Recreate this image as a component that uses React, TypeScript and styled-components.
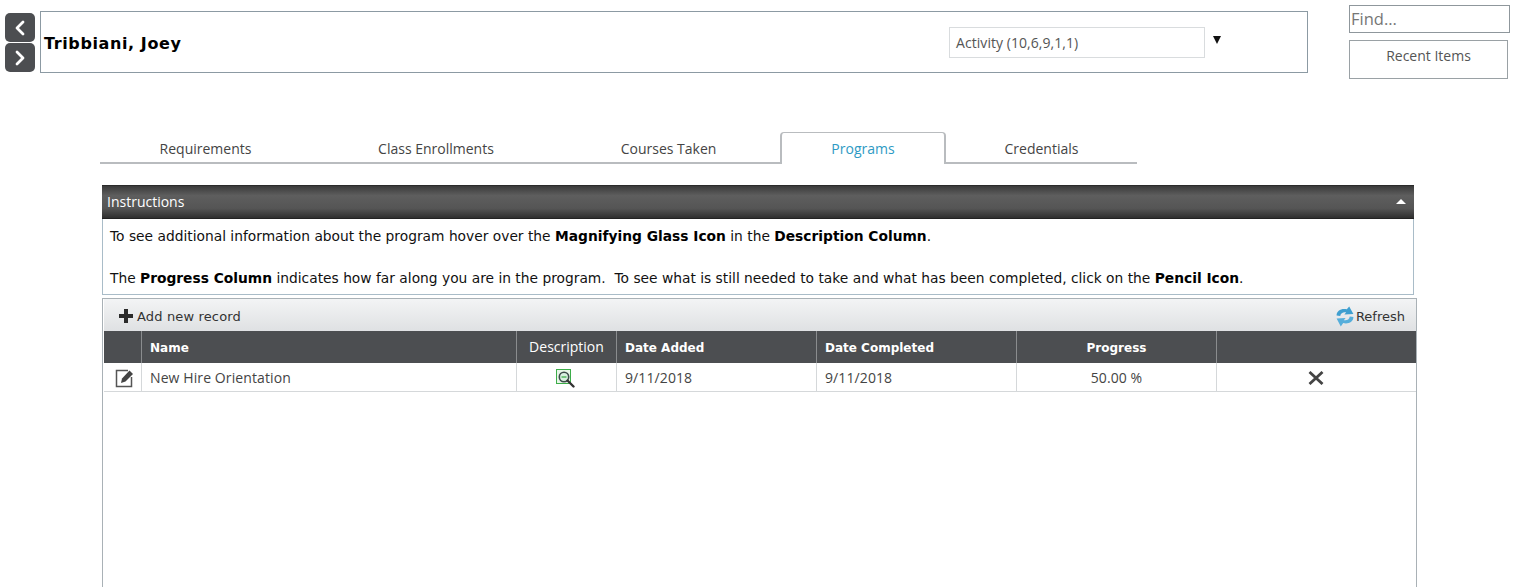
import styled, { createGlobalStyle } from 'styled-components';

const uiFont = `"Open Sans", "Noto Sans", "Liberation Sans", sans-serif`;
const verdana = `"DejaVu Sans", Verdana, sans-serif`;

const GlobalStyle = createGlobalStyle`
  html, body {
    margin: 0;
    padding: 0;
    height: 587px;
    overflow: hidden;
    background: #fff;
  }
  * { box-sizing: border-box; }
`;

const Page = styled.div`
  width: 1532px;
  height: 587px;
  overflow: hidden;
  display: flex;
  flex-direction: column;
  color: #333;
`;

const TopBar = styled.header`
  display: flex;
  align-items: flex-start;
  height: 132px;
  padding: 5px 0 0 5px;
`;

const NavButtons = styled.div`
  display: flex;
  flex-direction: column;
  gap: 1px;
  margin: 8px 5px 0 0;
`;

const NavButton = styled.button`
  width: 30px;
  height: 29px;
  padding: 0;
  border: 0;
  border-radius: 5px;
  background: #4c4e51;
  display: flex;
  align-items: center;
  justify-content: center;
`;

const PersonBox = styled.div`
  width: 1268px;
  height: 62px;
  margin-top: 6px;
  border: 1px solid #8c9aa3;
  display: flex;
  align-items: center;
  padding-left: 3px;
`;

const PersonName = styled.div`
  font: bold 16px ${verdana};
  letter-spacing: 0.6px;
  color: #000;
  width: 905px;
  margin-top: 2px;
`;

const ActivitySelect = styled.div`
  width: 256px;
  height: 31px;
  border: 1px solid #d9dcde;
  padding-left: 6px;
  display: flex;
  align-items: center;
  font: 14px ${uiFont};
  letter-spacing: 0.06px;
  color: #555;
`;

const Caret = styled.span`
  width: 0;
  height: 0;
  margin: -5px 0 0 8px;
  border-left: 4px solid transparent;
  border-right: 4px solid transparent;
  border-top: 8px solid #111;
`;

const SideColumn = styled.div`
  display: flex;
  flex-direction: column;
  margin-left: 41px;
  gap: 7px;
`;

const FindInput = styled.div`
  width: 161px;
  height: 28px;
  border: 1px solid #8f979c;
  padding-left: 1px;
  font: 16.500px/25px ${uiFont};
  color: #767676;
`;

const RecentButton = styled.div`
  width: 159px;
  height: 39px;
  border: 1px solid #9aa1a5;
  text-align: center;
  font: 14px/29px ${uiFont};
  color: #555;
`;

const Tabs = styled.nav`
  display: flex;
  align-items: flex-end;
  width: 1037px;
  height: 32px;
  margin-left: 100px;
  border-bottom: 2px solid #b9bcbf;
`;

const Tab = styled.div<{ $active?: boolean; $width: number; $trim?: number }>`
  flex: none;
  width: ${p => p.$width}px;
  height: ${p => (p.$active ? '32px' : '30px')};
  padding-right: ${p => p.$trim || 0}px;
  text-align: center;
  font: 14px/33px ${uiFont};
  color: ${p => (p.$active ? '#2e9ac4' : '#444')};
  background: #fff;
  margin-bottom: ${p => (p.$active ? '-2px' : '0')};
  ${p =>
    p.$active &&
    `
    border: 2px solid #b9bcbf;
    border-bottom: 0;
    border-top-width: 1px;
    border-radius: 4px 4px 0 0;
    line-height: 31px;
  `}
`;

const Panel = styled.section`
  width: 1312px;
  height: 110px;
  margin: 21px 0 0 102px;
`;

const PanelHeader = styled.div`
  height: 34px;
  padding: 0 8px 2px 5px;
  display: flex;
  align-items: center;
  justify-content: space-between;
  background: linear-gradient(#3a3a3a 0%, #5e5e5e 30%, #555 70%, #2f2f2f 100%);
  border-top: 1px solid #2a2a2a;
  border-bottom: 1px solid #222;
  font: 14px ${uiFont};
  color: #fff;
`;

const CollapseArrow = styled.span`
  width: 0;
  height: 0;
  border-left: 5px solid transparent;
  border-right: 5px solid transparent;
  border-bottom: 5px solid #fff;
`;

const PanelBody = styled.div`
  height: 76px;
  border: 1px solid #a9bcc8;
  border-top: 0;
  padding: 7px 7px 0;
  font: 13.800px/21px ${verdana};
  color: #111;

  b { color: #000; }
  p { margin: 0; white-space: pre; }
  p + p { margin-top: 21px; }
`;

const GridBox = styled.section`
  width: 1315px;
  flex: 1;
  margin: 3px 0 0 102px;
  border: 1px solid #a9b1b6;
  border-bottom: 0;
  padding-left: 1px;
`;

const Toolbar = styled.div`
  height: 32px;
  display: flex;
  align-items: center;
  justify-content: space-between;
  padding: 2px 11px 0 15px;
  background: linear-gradient(#f3f4f5, #dfe1e3);
  font: 13px ${verdana};
  color: #333;
`;

const ToolbarAction = styled.div<{ $gap: number; $spacing?: number }>`
  display: flex;
  align-items: center;
  gap: ${p => p.$gap}px;
  letter-spacing: ${p => p.$spacing || 0}px;
`;

const Row = styled.div<{ $head?: boolean }>`
  display: grid;
  grid-template-columns: 37px 375px 100px 200px 200px 200px 200px;
  height: ${p => (p.$head ? '32px' : '29px')};
  background: ${p => (p.$head ? '#4c4e51' : '#fff')};
  border-bottom: ${p => (p.$head ? '0' : '1px solid #d5d8da')};
`;

const Cell = styled.div<{ $head?: boolean; $center?: boolean; $plain?: boolean }>`
  display: flex;
  align-items: center;
  justify-content: ${p => (p.$center ? 'center' : 'flex-start')};
  padding-left: ${p => (p.$center ? '0' : '8px')};
  padding-top: ${p => (p.$plain ? '0' : p.$head ? '2px' : '1px')};
  padding-bottom: ${p => (p.$plain ? '2px' : '0')};
  border-left: 1px solid ${p => (p.$head ? '#8a8c8e' : '#d5d8da')};
  color: ${p => (p.$head ? '#fff' : '#444')};
  letter-spacing: ${p => (p.$head ? '0' : '0.1px')};
  font: ${p =>
    p.$head && !p.$plain ? `bold 12px ${verdana}` : `14px ${uiFont}`};

  &:first-child { border-left: 0; }
`;

const PlusIcon = () => (
  <svg width="14" height="14" viewBox="0 0 14 14">
    <path d="M5 0h4v5h5v4H9v5H5V9H0V5h5z" fill="#2b2b2b" />
  </svg>
);

const RefreshIcon = () => (
  <svg width="18" height="21" viewBox="1.500 0 15 20" preserveAspectRatio="none">
    <path d="M2 9C2 4.500 6 2 10.500 3.200L12.500 .5 16 7.500 8.500 8 10 6C7.500 5.500 5.500 6.500 5 9.500z" fill="#3f9fd0" />
    <path d="M16 10.500c0 4.500-4 7-8.500 5.800L5.500 19.500 2 12l7.500-.5L8 13.500c2.500.5 4.500-.5 5-3.500z" fill="#55aedb" />
  </svg>
);

const EditIcon = () => (
  <svg width="20" height="20" viewBox="0 0 20 20" style={{ marginLeft: 4 }}>
    <path d="M13 2.500H1.500v16h15V9" fill="none" stroke="#555" strokeWidth="1.500" />
    <path d="M6 15l1-4.500 7.500-8 3.500 3.500-7.500 7.500z" fill="#444" />
  </svg>
);

const MagnifierIcon = () => (
  <svg width="20" height="19" viewBox="0 0 20 19" style={{ marginLeft: -1, marginTop: 1 }}>
    <rect x="0.500" y="0.500" width="14" height="14" fill="#e8f6e8" stroke="#3dad4a" />
    <circle cx="8" cy="8" r="4.700" fill="#d9efe0" stroke="#3c4b4a" strokeWidth="1.600" />
    <path d="M5.500 8h5" stroke="#3dad4a" strokeWidth="1.300" />
    <path d="M11.500 11.500l6 6" stroke="#333" strokeWidth="2.400" strokeLinecap="round" />
  </svg>
);

const CloseIcon = () => (
  <svg width="16" height="14" viewBox="0 0 16 14" style={{ marginLeft: -2, marginTop: 1 }}>
    <path d="M1.500 1l13 12M14.500 1l-13 12" stroke="#444" strokeWidth="2.800" />
  </svg>
);

const Chevron = ({ d }: { d: string }) => (
  <svg width="12" height="16" viewBox="0 0 12 16">
    <path d={d} fill="none" stroke="#fff" strokeWidth="2.800" strokeLinecap="round" strokeLinejoin="round" />
  </svg>
);

const tabs = [
  { label: 'Requirements', width: 211 },
  { label: 'Class Enrollments', width: 250 },
  { label: 'Courses Taken', width: 219, trim: 4 },
  { label: 'Programs', width: 166, active: true },
  { label: 'Credentials', width: 191 },
];

const App = () => {
  return (
    <Page>
      <GlobalStyle />
      <TopBar>
        <NavButtons>
          <NavButton aria-label="Previous">
            <Chevron d="M9 2L3 8l6 6" />
          </NavButton>
          <NavButton aria-label="Next">
            <Chevron d="M3 2l6 6-6 6" />
          </NavButton>
        </NavButtons>
        <PersonBox>
          <PersonName>Tribbiani, Joey</PersonName>
          <ActivitySelect>Activity (10,6,9,1,1)</ActivitySelect>
          <Caret />
        </PersonBox>
        <SideColumn>
          <FindInput>Find...</FindInput>
          <RecentButton>Recent Items</RecentButton>
        </SideColumn>
      </TopBar>

      <Tabs>
        {tabs.map(t => (
          <Tab key={t.label} $active={t.active} $width={t.width} $trim={t.trim}>
            {t.label}
          </Tab>
        ))}
      </Tabs>

      <Panel>
        <PanelHeader>
          Instructions
          <CollapseArrow />
        </PanelHeader>
        <PanelBody>
          <p>
            To see additional information about the program hover over the <b>Magnifying Glass Icon</b> in the{' '}
            <b>Description Column</b>.
          </p>
          <p>
            The <b>Progress Column</b> indicates how far along you are in the program.{'  '}To see what is still needed
            to take and what has been completed, click on the <b>Pencil Icon</b>.
          </p>
        </PanelBody>
      </Panel>

      <GridBox>
        <Toolbar>
          <ToolbarAction $gap={4} $spacing={0.15}>
            <PlusIcon />
            Add new record
          </ToolbarAction>
          <ToolbarAction $gap={2}>
            <RefreshIcon />
            Refresh
          </ToolbarAction>
        </Toolbar>
        <Row $head>
          <Cell $head />
          <Cell $head>Name</Cell>
          <Cell $head $center $plain>
            Description
          </Cell>
          <Cell $head>Date Added</Cell>
          <Cell $head>Date Completed</Cell>
          <Cell $head $center>
            Progress
          </Cell>
          <Cell $head />
        </Row>
        <Row>
          <Cell $center>
            <EditIcon />
          </Cell>
          <Cell>New Hire Orientation</Cell>
          <Cell $center>
            <MagnifierIcon />
          </Cell>
          <Cell>9/11/2018</Cell>
          <Cell>9/11/2018</Cell>
          <Cell $center>50.00 %</Cell>
          <Cell $center>
            <CloseIcon />
          </Cell>
        </Row>
      </GridBox>
    </Page>
  );
};

export default App;
